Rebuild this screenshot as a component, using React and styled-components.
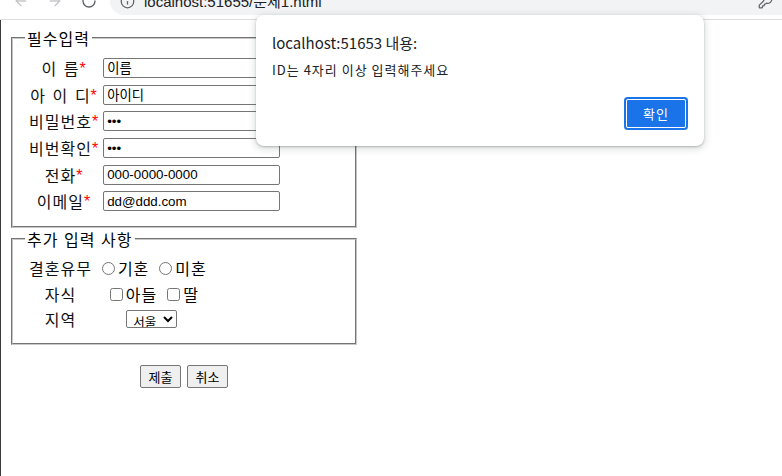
import styled, { createGlobalStyle } from 'styled-components';
import { ArrowLeft, ArrowRight, RotateCw, Info, KeyRound } from 'lucide-react';

const GlobalStyle = createGlobalStyle`
  html, body {
    margin: 0;
    padding: 0;
    background: #fff;
  }
  body {
    font-family: "Noto Sans CJK KR", "Liberation Sans", sans-serif;
    color: #000;
    overflow: hidden;
  }
`;

const Window = styled.div`
  position: relative;
  width: 782px;
  height: 476px;
  overflow: hidden;
`;

const Toolbar = styled.div`
  height: 36px;
  margin-top: -17px;
  display: flex;
  align-items: center;
  background: #fff;
  border-bottom: 1px solid #dadce0;
  padding-left: 13px;
  gap: 18px;
`;

const NavIcon = styled.span`
  display: flex;
  width: 16px;
  color: ${p => (p.$off ? '#c5c7ca' : '#5f6368')};
`;

const Omnibox = styled.div`
  flex: 1;
  height: 28px;
  margin-left: -5px;
  display: flex;
  align-items: center;
  gap: 8px;
  padding-left: 10px;
  background: #f1f3f4;
  border-radius: 14px 0 0 14px;
  font-family: "Liberation Sans", "Noto Sans CJK KR", sans-serif;
  font-size: 15px;
  color: #202124;
`;

const Url = styled.span`
  flex: 1;
  line-height: 1;
`;

const Page = styled.div`
  border-left: 1px solid #3c3c3c;
  height: 456px;
  padding: 7px 8px 8px;
  box-sizing: border-box;
`;

const Form = styled.form`
  display: inline-block;
  width: 350px;
`;

const Fieldset = styled.fieldset`
  margin: 0 2px;
  width: 346px;
  box-sizing: border-box;
  padding: 4.6px 12px 10px 12px;
  border: 2px groove #c8c8c8;
`;

const Legend = styled.legend`
  font-size: 16px;
  line-height: 22px;
  letter-spacing: 1px;
  word-spacing: 1px;
  padding: 0 2px;
`;

const Table = styled.table`
  border-spacing: 2px;
  border-collapse: separate;
`;

const Label = styled.td`
  padding: 0 2px;
  height: ${p => p.$h};
  font-size: 16px;
  line-height: 20px;
  letter-spacing: 1px;
  word-spacing: 2px;
  text-align: center;
  vertical-align: middle;
  white-space: pre;
  color: #111;
`;

const Star = styled.span`
  color: #ff0000;
  font-family: "Liberation Sans", sans-serif;
  font-size: 16px;
  line-height: 0;
  letter-spacing: 0;
  position: relative;
  top: -1px;
`;

const Field = styled.td`
  padding: 0 1px;
  vertical-align: middle;
`;

const Options = styled.div`
  display: flex;
  justify-content: center;
  align-items: center;
  gap: 5px;
  font-size: 16px;
  line-height: 20px;
  letter-spacing: 1px;
  white-space: nowrap;
`;

const TextInput = styled.input`
  display: block;
  width: 177px;
  height: 20px;
  box-sizing: border-box;
  margin: 0;
  padding: 1px 3px;
  border: 1px solid #767676;
  border-radius: 2px;
  font-family: "Liberation Sans", "Noto Sans CJK KR", sans-serif;
  font-size: 13.33px;
  color: #000;
`;

const Choice = styled.label`
  display: inline-flex;
  align-items: center;
`;

const Check = styled.input`
  width: 13px;
  height: 13px;
  margin: 1px 3px 0 5px;
`;

const Select = styled.select`
  width: 51px;
  height: 18px;
  font-family: "Noto Sans CJK KR", sans-serif;
  font-size: 12.5px;
  line-height: 14px;
  letter-spacing: 0;
  padding: 0 0 0 2px;
  border: 1px solid #767676;
  border-radius: 2px;
  background: #fff;
  color: #000;
`;

const ButtonRow = styled.div`
  display: flex;
  justify-content: center;
  gap: 6px;
  padding-top: 20px;
`;

const Button = styled.button`
  height: 23px;
  width: 41px;
  padding: 0;
  font-family: "Noto Sans CJK KR", sans-serif;
  font-size: 13px;
  line-height: 19px;
  color: #000;
  background: #efefef;
  border: 1px solid #767676;
  border-radius: 2px;
`;

const Dialog = styled.div`
  position: absolute;
  left: 256px;
  top: 15px;
  width: 448px;
  height: 131px;
  box-sizing: border-box;
  padding: 18px 16px 16px 16px;
  background: #fff;
  border-radius: 8px;
  box-shadow: 0 1px 2px rgba(60, 64, 67, 0.3), 0 2px 6px 2px rgba(60, 64, 67, 0.15);
  display: flex;
  flex-direction: column;
`;

const DialogTitle = styled.div`
  font-family: "Noto Sans CJK KR", "Liberation Sans", sans-serif;
  font-size: 15px;
  line-height: 20px;
  color: #202124;
`;

const DialogText = styled.div`
  margin-top: 9px;
  font-family: "Noto Sans CJK KR", "Liberation Sans", sans-serif;
  font-size: 13px;
  line-height: 16px;
  letter-spacing: 1px;
  color: #202124;
`;

const DialogActions = styled.div`
  margin-top: auto;
  display: flex;
  justify-content: flex-end;
`;

const OkButton = styled.button`
  width: 64px;
  height: 33px;
  border: none;
  border-radius: 4px;
  background: #1a73e8;
  color: #fff;
  font-family: "Noto Sans CJK KR", sans-serif;
  font-size: 13px;
  letter-spacing: 1px;
  box-shadow: inset 0 0 0 2px #1a73e8, inset 0 0 0 3px #fff;
`;

const requiredFields = [
  { label: '이 름', type: 'text', value: '이름' },
  { label: '아 이 디', type: 'text', value: '아이디' },
  { label: '비밀번호', type: 'password', value: 'abc' },
  { label: '비번확인', type: 'password', value: 'abc' },
  { label: '전화', type: 'text', value: '000-0000-0000' },
  { label: '이메일', type: 'text', value: 'dd@ddd.com' },
];

export default function App() {
  return (
    <Window>
      <GlobalStyle />
      <Toolbar>
        <NavIcon $off><ArrowLeft size={16} /></NavIcon>
        <NavIcon $off><ArrowRight size={16} /></NavIcon>
        <NavIcon><RotateCw size={16} /></NavIcon>
        <Omnibox>
          <NavIcon><Info size={15} /></NavIcon>
          <Url>localhost:51655/문제1.html</Url>
          <NavIcon style={{ marginRight: 8 }}><KeyRound size={15} /></NavIcon>
        </Omnibox>
      </Toolbar>

      <Page>
        <Form onSubmit={e => e.preventDefault()}>
          <Fieldset>
            <Legend>필수입력</Legend>
            <Table>
              <tbody>
                {requiredFields.map(f => (
                  <tr key={f.label}>
                    <Label $h="24.7px">{f.label}<Star>*</Star></Label>
                    <Field>
                      <TextInput type={f.type} defaultValue={f.value} readOnly />
                    </Field>
                  </tr>
                ))}
              </tbody>
            </Table>
          </Fieldset>

          <Fieldset>
            <Legend>추가 입력 사항</Legend>
            <Table>
              <tbody>
                <tr>
                  <Label $h="23.5px">결혼유무</Label>
                  <Field>
                    <Options>
                      <Choice><Check type="radio" name="married" />기혼</Choice>
                      <Choice><Check type="radio" name="married" />미혼</Choice>
                    </Options>
                  </Field>
                </tr>
                <tr>
                  <Label $h="23.5px">자식</Label>
                  <Field>
                    <Options>
                      <Choice><Check type="checkbox" />아들</Choice>
                      <Choice><Check type="checkbox" />딸</Choice>
                    </Options>
                  </Field>
                </tr>
                <tr>
                  <Label $h="23.5px">지역</Label>
                  <Field>
                    <Options>
                      <Select defaultValue="서울">
                        <option>서울</option>
                        <option>부산</option>
                        <option>대구</option>
                      </Select>
                    </Options>
                  </Field>
                </tr>
              </tbody>
            </Table>
          </Fieldset>

          <ButtonRow>
            <Button type="submit">제출</Button>
            <Button type="reset">취소</Button>
          </ButtonRow>
        </Form>
      </Page>

      <Dialog>
        <DialogTitle>localhost:51653 내용:</DialogTitle>
        <DialogText>ID는 4자리 이상 입력해주세요</DialogText>
        <DialogActions>
          <OkButton>확인</OkButton>
        </DialogActions>
      </Dialog>
    </Window>
  );
}
